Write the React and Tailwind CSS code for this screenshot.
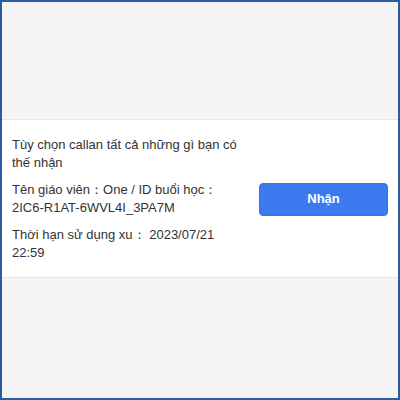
import React from 'react';

export default function App() {
    return (
        <div className="w-[400px] h-[400px] border-2 border-[#2e5b9a] bg-[#f5f5f5] flex flex-col font-['Liberation_Sans',Arial,sans-serif]">
            <div className="h-[117px]" />
            <div className="bg-white border-y border-[#e6e6e6] px-[10px] pt-[16px] pb-[15px] flex items-center justify-between">
                <div className="w-[232px] text-[13px] leading-[18px] text-[#333333] flex flex-col gap-[9px]">
                    <p>Tùy chọn callan tất cả những gì bạn có thế nhận</p>
                    <p>Tên giáo viên：One / ID buổi học：2IC6-R1AT-6WVL4I_3PA7M</p>
                    <p>Thời hạn sử dụng xu：&nbsp;2023/07/21 22:59</p>
                </div>
                <button className="w-[129px] h-[33px] rounded-[4px] bg-[#3b7bef] border border-[#3574e8] text-white text-[13px] font-bold">
                    Nhận
                </button>
            </div>
        </div>
    );
}
